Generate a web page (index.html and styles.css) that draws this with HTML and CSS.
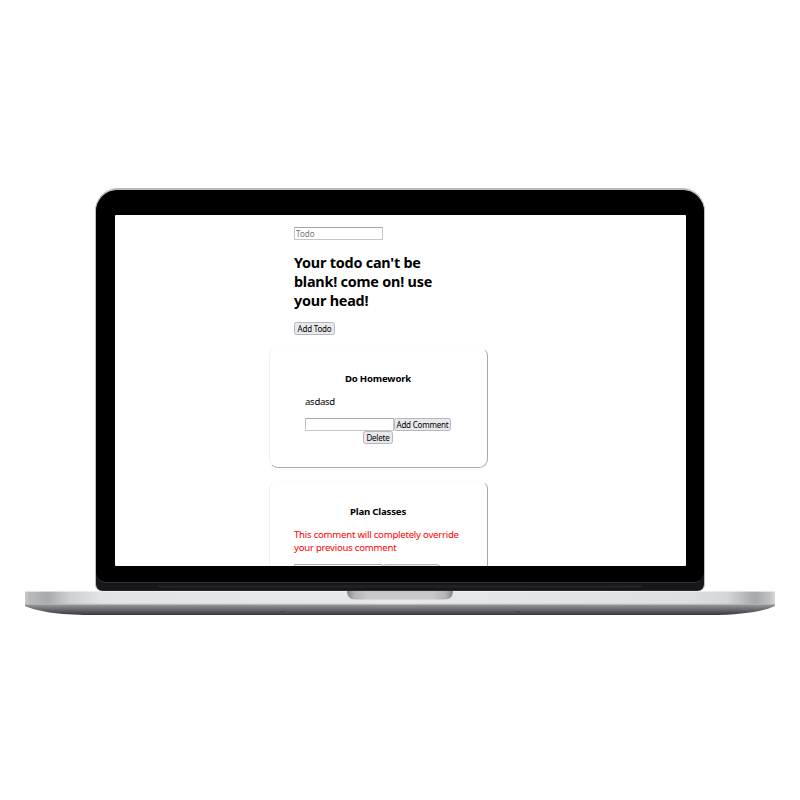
FILE: index.html
```html
<!DOCTYPE html>
<html lang="en">
<head>
<meta charset="utf-8">
<title>Todo</title>
<link rel="stylesheet" href="styles.css">
</head>
<body>
<main class="laptop">
  <div class="lid">
    <div class="bezel">
      <div class="screen">
        <form class="todo-form">
          <input class="field" placeholder="Todo">
          <h2 class="warning">Your todo can't be<br>blank! come on! use<br>your head!</h2>
          <button type="button" class="btn add-todo">Add Todo</button>
        </form>
        <section class="card">
          <h4 class="card-title">Do Homework</h4>
          <p class="comment">asdasd</p>
          <div class="row indent"><input class="field" aria-label="Comment"><button type="button" class="btn add-comment">Add Comment</button></div>
          <button type="button" class="btn delete">Delete</button>
        </section>
        <section class="card">
          <h4 class="card-title">Plan Classes</h4>
          <p class="notice">This comment will completely override<br>your previous comment</p>
          <div class="row"><input class="field" aria-label="Comment"><button type="button" class="btn add-comment" aria-label="Add"></button></div>
        </section>
      </div>
    </div>
    <div class="hinge"></div>
  </div>
  <svg class="base" width="752" height="26" viewBox="24 590 752 26">
    <defs>
      <linearGradient id="metal" x1="25" x2="775" gradientUnits="userSpaceOnUse">
        <stop offset="0" stop-color="#c8c9cb"/><stop offset=".006" stop-color="#b9babc"/>
        <stop offset=".03" stop-color="#a9aaac"/><stop offset=".06" stop-color="#cfd0d2"/>
        <stop offset=".1" stop-color="#e2e3e5"/><stop offset=".5" stop-color="#e8e9eb"/>
        <stop offset=".88" stop-color="#dedfe1"/><stop offset=".935" stop-color="#d5d6d8"/>
        <stop offset=".974" stop-color="#a7a8aa"/><stop offset=".993" stop-color="#c0c1c3"/>
        <stop offset="1" stop-color="#d6d7d9"/>
      </linearGradient>
      <linearGradient id="under" x1="0" x2="0" y1="604.5" y2="615" gradientUnits="userSpaceOnUse">
        <stop offset="0" stop-color="#97989b"/><stop offset=".45" stop-color="#6c6d71"/><stop offset="1" stop-color="#37383d"/>
      </linearGradient>
      <linearGradient id="notch" x1="347" x2="453" gradientUnits="userSpaceOnUse">
        <stop offset="0" stop-color="#858588"/><stop offset=".07" stop-color="#b4b4b7"/>
        <stop offset=".2" stop-color="#c8c8ca"/><stop offset=".8" stop-color="#c8c8ca"/>
        <stop offset=".93" stop-color="#b4b4b7"/><stop offset="1" stop-color="#858588"/>
      </linearGradient>
    </defs>
    <path fill="url(#under)" d="M25 604H775V606C764 611 742 615 710 615H90C58 615 36 611 25 606Z"/>
    <rect x="25" y="591" width="750" height="13.5" fill="url(#metal)"/>
    <path d="M25 604.2H775" stroke="#b9babd" stroke-width=".8"/>
    <path d="M25 591.4H775" stroke="#f2f2f3" stroke-width=".8"/>
    <path fill="url(#notch)" d="M347 591H453C453 596 450 599.5 445 599.5H355C350 599.5 347 596 347 591Z"/>
    <ellipse cx="282.5" cy="612" rx="2.5" ry="1" fill="#47484c"/>
    <ellipse cx="518" cy="612" rx="2.5" ry="1" fill="#47484c"/>
  </svg>
</main>
</body>
</html>
```
FILE: styles.css
```css
* { box-sizing: border-box; }
body { margin: 0; background: #fff; font-family: "Noto Sans", sans-serif; color: #000; }
.laptop { width: 800px; height: 800px; padding-top: 188px; display: flex; flex-direction: column; align-items: center; overflow: hidden; }
.lid { width: 610px; height: 403px; flex: none; border: 1px solid #bcbdbf; border-top: 2px solid #b9b9bb; border-bottom: 0; border-radius: 23px 23px 7px 7px; background: #15171a; overflow: hidden; }
.bezel { height: 393px; padding: 25px 18px 0 19px; background: #000; border-radius: 21px 21px 10px 10px; border-bottom: 1px solid #303236; }
.screen { width: 571px; height: 351px; padding: 12px 0 0 154px; background: #fff; border-radius: 1px; overflow: hidden; }
.hinge { height: 3px; margin: 2px 62px 0; background: #1e2024; }
.base { flex: none; margin-top: -1px; }
.todo-form { width: 170px; height: 120px; margin-left: 25px; }
.field { display: block; width: 89px; height: 13px; padding: 0 1px; border: 1px solid #c4c6ca; border-top-color: #a5a7ad; border-radius: 0; outline: 0; background: #fff; font: 8px "Noto Sans", sans-serif; }
.field::placeholder { color: #757575; opacity: 1; }
.warning { margin: 13px 0 12px; font: 700 14.4px/19px "Noto Sans", sans-serif; letter-spacing: -.22px; white-space: nowrap; }
.btn { display: block; height: 13px; padding: 0; border: 1px solid #b4b6c0; border-radius: 2.5px; background: #e9e9ed; color: #000; font: 8px/10px "Noto Sans", sans-serif; letter-spacing: -.2px; white-space: nowrap; }
.add-todo { width: 41px; }
.card { width: 219px; height: 121px; margin-bottom: 12px; padding: 24px 25px 0 24px; border: 1px solid #f1f1f1; border-right-color: #aaa; border-bottom-color: #aaa; border-top-color: #fcfcfc; border-radius: 9px; }
.card-title { margin: 0 0 10px; font-size: 9.6px; line-height: 13px; letter-spacing: -.18px; text-align: center; white-space: nowrap; }
.comment { margin: 0 0 10px 11px; font-size: 9.6px; line-height: 13px; letter-spacing: -.3px; }
.notice { margin: 0 0 10px; color: #f00; font-size: 9.6px; line-height: 13px; letter-spacing: -.235px; white-space: nowrap; }
.row { display: flex; }
.indent { margin-left: 11px; }
.add-comment { width: 57px; }
.delete { width: 30px; margin: 0 auto; }
```
